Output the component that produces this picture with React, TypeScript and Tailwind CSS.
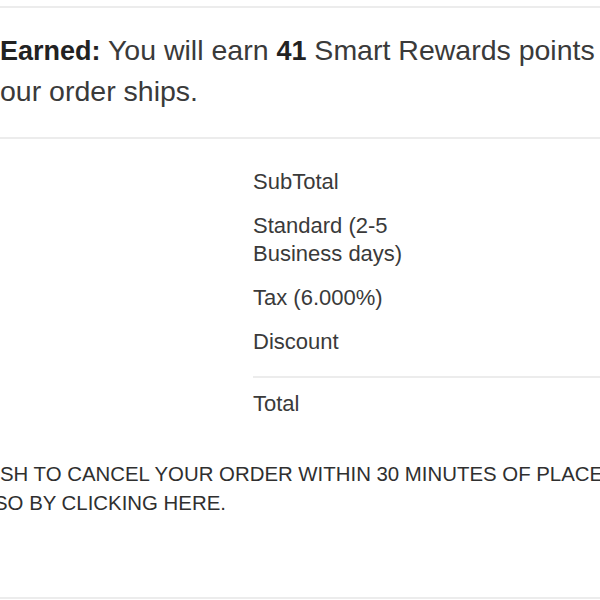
export default function App() {
  const rows = [
    { label: "SubTotal" },
    { label: "Standard (2-5 Business days)" },
    { label: "Tax (6.000%)" },
    { label: "Discount" },
  ];

  return (
    <main
      className="h-[600px] w-[600px] overflow-hidden bg-white text-[#3a3a3a]"
      style={{ fontFamily: '"Liberation Sans", Arial, sans-serif' }}
    >
      <div className="h-[6px]" />
      <section className="border-y-2 border-[#ececec] pt-[22px] pb-[26px] text-[28.5px] leading-[40px]">
        <p className="whitespace-nowrap">
          <span className="text-[27px] font-bold text-[#222222]">Earned:</span> You will earn{" "}
          <span className="text-[27px] font-bold text-[#222222]">41</span> Smart Rewards points
        </p>
        <p className="whitespace-nowrap">our order ships.</p>
      </section>

      <section className="pt-[21px] pl-[253px] text-[22px] leading-[28px]">
        <div className="w-[347px]">
          {rows.map((row) => (
            <div key={row.label} className="py-2">
              <p className="w-[170px]">{row.label}</p>
            </div>
          ))}
          <div className="mt-3 border-t-2 border-[#ececec] pt-[12px] pb-2">
            <p>Total</p>
          </div>
        </div>
      </section>

      <section className="mt-[34px] text-[20.4px] leading-[29px] text-[#2f2f2f]">
        <p className="whitespace-nowrap">
          SH TO CANCEL YOUR ORDER WITHIN 30 MINUTES OF PLACEMENT, YOU MAY DO
        </p>
        <p className="-ml-[6px] whitespace-nowrap">SO BY CLICKING HERE.</p>
      </section>

      <div className="mt-[79px] border-t-2 border-[#ececec]" />
    </main>
  );
}
